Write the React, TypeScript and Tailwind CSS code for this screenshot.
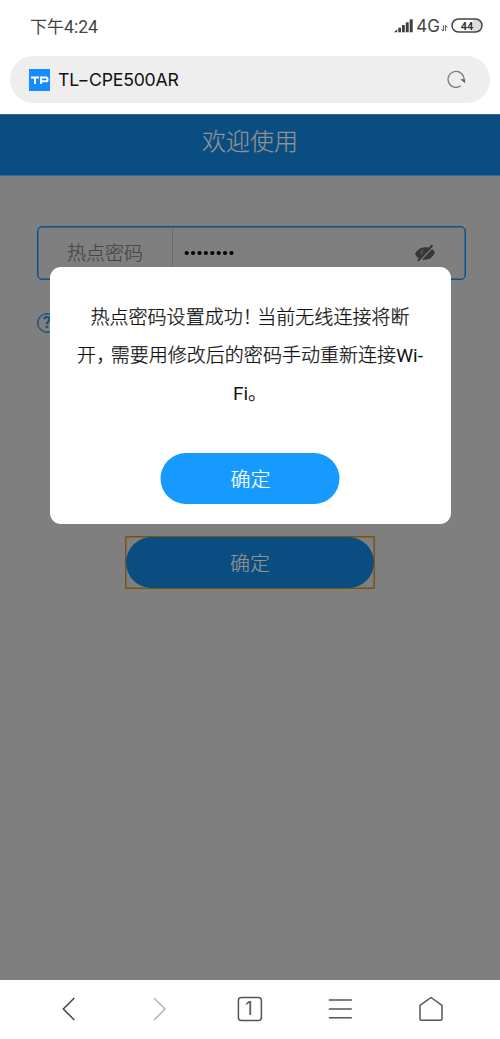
function StatusBar() {
  return (
    <header className="flex h-14 items-start justify-between pt-[16px] pr-[17px] pl-[30px] text-[#444]">
      <div className="-mt-[1px] text-[17px] leading-[21px] whitespace-nowrap">
        下午<span className="font-['Roboto','Noto_Sans_CJK_SC',sans-serif] text-[17.6px]">4:24</span>
      </div>
      <div className="flex items-center">
        <svg className="mr-[-1px] -mt-[2px]" width="19" height="14" viewBox="0 0 19 14" fill="#3f3f3f">
          <path d="M0 13.3L3.2 10.2V13.3z" />
          <rect x="4.3" y="8.7" width="2.7" height="4.6" />
          <rect x="8" y="6" width="2.8" height="7.3" />
          <rect x="11.8" y="3.3" width="2.9" height="10" />
          <rect x="15.7" y="0.3" width="3" height="13" />
        </svg>
        <span className="ml-[4px] font-['Inter','Noto_Sans_CJK_SC',sans-serif] text-[17px] leading-[21px]">4G</span>
        <svg className="mt-[4px] ml-[1px]" width="7" height="7" viewBox="0 0 7 7" fill="none" stroke="#555" strokeWidth="1">
          <path d="M2.4 0.5V6L.5 4.1M4.6 6V.5L6.5 2.4" />
        </svg>
        <svg className="-mt-[2px] ml-[3px]" width="32" height="15" viewBox="0 0 32 15">
          <rect x="1" y="1" width="30" height="13" rx="6.5" fill="#fff" />
          <path d="M22 2h3a5.5 5.5 0 0 1 0 11h-3z" fill="#ddd" />
          <rect x="1" y="1" width="30" height="13" rx="6.5" fill="none" stroke="#444" strokeWidth="1.5" />
          <text x="16" y="11.5" textAnchor="middle" fill="#333" className="font-['Roboto','Noto_Sans_CJK_SC',sans-serif] text-[11px] font-bold">44</text>
        </svg>
      </div>
    </header>
  );
}

function AddressBar() {
  return (
    <div className="mx-[10px] flex h-[47px] items-center rounded-full bg-[#eee] pr-[24px] pl-[19px]">
      <svg width="21" height="22" viewBox="0 0 21 22">
        <rect width="21" height="22" fill="#168cff" />
        <path d="M2 8.5H10M6 8.5V15M12 15V8.5H17Q18.6 8.5 18.6 10.4T17 12.3H12" fill="none" stroke="#fff" strokeWidth="2" />
      </svg>
      <div className="ml-[8px] flex-1 font-['Inter','Noto_Sans_CJK_SC',sans-serif] text-[17.7px] leading-6 tracking-[-0.22px] text-[#111]">TL−CPE500AR</div>
      <svg width="20" height="20" viewBox="0 0 20 20" fill="none">
        <path d="M14.8 15.8A8 8 0 1 1 18 10" stroke="#777" strokeWidth="1.2" />
        <path d="M14.1 9.2h5v4z" fill="#666" />
      </svg>
    </div>
  );
}

function HotspotPage() {
  return (
    <main className="relative h-[866px] bg-[#7f7f7f]">
      <h1 className="h-[62px] border-y border-t-[#376692] border-b-[#2e6793] bg-[#0a4d81] text-center text-[24px] leading-[50px] font-light text-[#929292] [-webkit-text-stroke:0.2px]">
        欢迎使用
      </h1>
      <div className="mt-[50px] mr-[34px] ml-[37px] flex h-[54px] items-stretch rounded-[5px] border border-[#0c5188] shadow-[inset_0_0_0_0.5px_#0c5188]">
        <label className="w-[135px] border-r border-[#696969] text-center text-[19px] leading-[50px] font-light text-[#464646] [-webkit-text-stroke:0.2px]">
          热点密码
        </label>
        <div className="flex flex-1 items-center justify-between pr-[30px] pl-[11px]">
          <svg width="50" height="6" viewBox="0 0 50 6" fill="#000" aria-label="已输入密码">
            <circle cx="2.7" cy="3" r="2.1" /><circle cx="9.1" cy="3" r="2.1" />
            <circle cx="15.5" cy="3" r="2.1" /><circle cx="21.9" cy="3" r="2.1" />
            <circle cx="28.3" cy="3" r="2.1" /><circle cx="34.7" cy="3" r="2.1" />
            <circle cx="41.1" cy="3" r="2.1" /><circle cx="47.5" cy="3" r="2.1" />
          </svg>
          <svg width="20" height="18" viewBox="0 0 20 18">
            <path d="M0 9.8Q3 3.4 10 3.2T20 8.6Q17 15.3 10 15.8T0 9.8Z" fill="#373737" />
            <path d="M8.6 5.6Q5.2 7.6 6.7 10.6" fill="none" stroke="#666" strokeWidth="1" />
            <path d="M4.4 17.4L19 2" stroke="#7f7f7f" strokeWidth="1.4" />
            <path d="M2.8 17L17.4 1.2" stroke="#373737" strokeWidth="2" />
          </svg>
        </div>
      </div>
      <div className="mt-[33px] ml-[37px] flex size-[20px] items-center justify-center rounded-full border border-[#174f7c] font-['Roboto','Noto_Sans_CJK_SC',sans-serif] text-[17px] font-bold text-[#174f7c] shadow-[inset_0_0_0_0.5px_#174f7c]">
        ?
      </div>
      <div className="mx-auto mt-[203px] h-[53px] w-[250px] rounded-[1px] border border-[#7b550e] shadow-[inset_0_0_0_0.5px_#7b550e]">
        <button className="block h-full w-full rounded-full bg-[#0a4d81] text-[20px] leading-[51px] font-light text-[#929292] [-webkit-text-stroke:0.2px]">
          确定
        </button>
      </div>
      <ResultDialog />
    </main>
  );
}

function ResultDialog() {
  return (
    <section
      role="dialog"
      className="absolute top-[153px] left-[49.5px] h-[257px] w-[401px] rounded-[11px] bg-white pt-[30px] text-center"
    >
      <div className="text-[19.05px] leading-[38px] font-light whitespace-nowrap text-[#111] [-webkit-text-stroke:0.25px]">
        <p className="h-[38px]">
          热点密码设置成功<span className="inline-block w-[14.5px] text-left [font-feature-settings:'halt']">！</span>当前无线连接将断
        </p>
        <p className="h-[38px]">
          开<span className="inline-block w-[14.5px] text-left [font-feature-settings:'halt']">，</span>需要用修改后的密码手动重新连接<Latin text="Wi-" />
        </p>
        <p className="h-[38px]">
          <Latin text="Fi" />。
        </p>
      </div>
      <button className="mr-auto ml-[111px] mt-[42px] block h-[51px] w-[179px] -translate-x-[0.5px] rounded-full bg-[#169aff] pl-[2px] text-[20px] leading-[48px] font-light text-white [-webkit-text-stroke:0.2px]">
        确定
      </button>
    </section>
  );
}

function Latin({ text }: { text: string }) {
  return (
    <span className="font-['Roboto','Noto_Sans_CJK_SC',sans-serif] font-normal [-webkit-text-stroke:0px]">{text}</span>
  );
}

function BottomNav() {
  return (
    <nav className="flex h-[59px] items-center bg-white pr-[23.5px] pb-[1px] pl-[23px]">
      <div className="flex flex-1 justify-center">
        <svg width="24" height="26" viewBox="0 0 24 26" fill="none" stroke="#444" strokeWidth="1.5">
          <path d="M18.3 2L7.3 13L18.3 24" />
        </svg>
      </div>
      <div className="flex flex-1 justify-center">
        <svg width="24" height="26" viewBox="0 0 24 26" fill="none" stroke="#b5b5b5" strokeWidth="1.5">
          <path d="M7 2L18 13L7 24" />
        </svg>
      </div>
      <div className="flex flex-1 justify-center">
        <svg width="26" height="26" viewBox="0 0 26 26">
          <rect x="1.4" y="1.4" width="23" height="23" rx="3" fill="none" stroke="#555" strokeWidth="1.5" />
          <text x="12" y="19.3" textAnchor="middle" fill="#555" className="font-['Inter','Noto_Sans_CJK_SC',sans-serif] text-[18px]">1</text>
        </svg>
      </div>
      <div className="flex flex-1 justify-center">
        <svg width="24" height="26" viewBox="0 0 24 26" fill="none" stroke="#555" strokeWidth="1.5">
          <path d="M.8 4H23.8M.8 13H23.8M.8 21.8H23.8" />
        </svg>
      </div>
      <div className="flex flex-1 justify-center">
        <svg width="24" height="26" viewBox="0 0 24 26" fill="none" stroke="#555" strokeWidth="1.5">
          <path d="M1 9.4L12 1.5L23 9.4V23Q23 24.2 21.8 24.2H2.2Q1 24.2 1 23Z" strokeLinejoin="round" />
        </svg>
      </div>
    </nav>
  );
}

export default function App() {
  return (
    <div className="flex h-[1039px] w-[500px] flex-col overflow-hidden bg-white font-['Noto_Sans_CJK_SC',sans-serif]">
      <StatusBar />
      <AddressBar />
      <div className="h-[11px]" />
      <HotspotPage />
      <BottomNav />
    </div>
  );
}
